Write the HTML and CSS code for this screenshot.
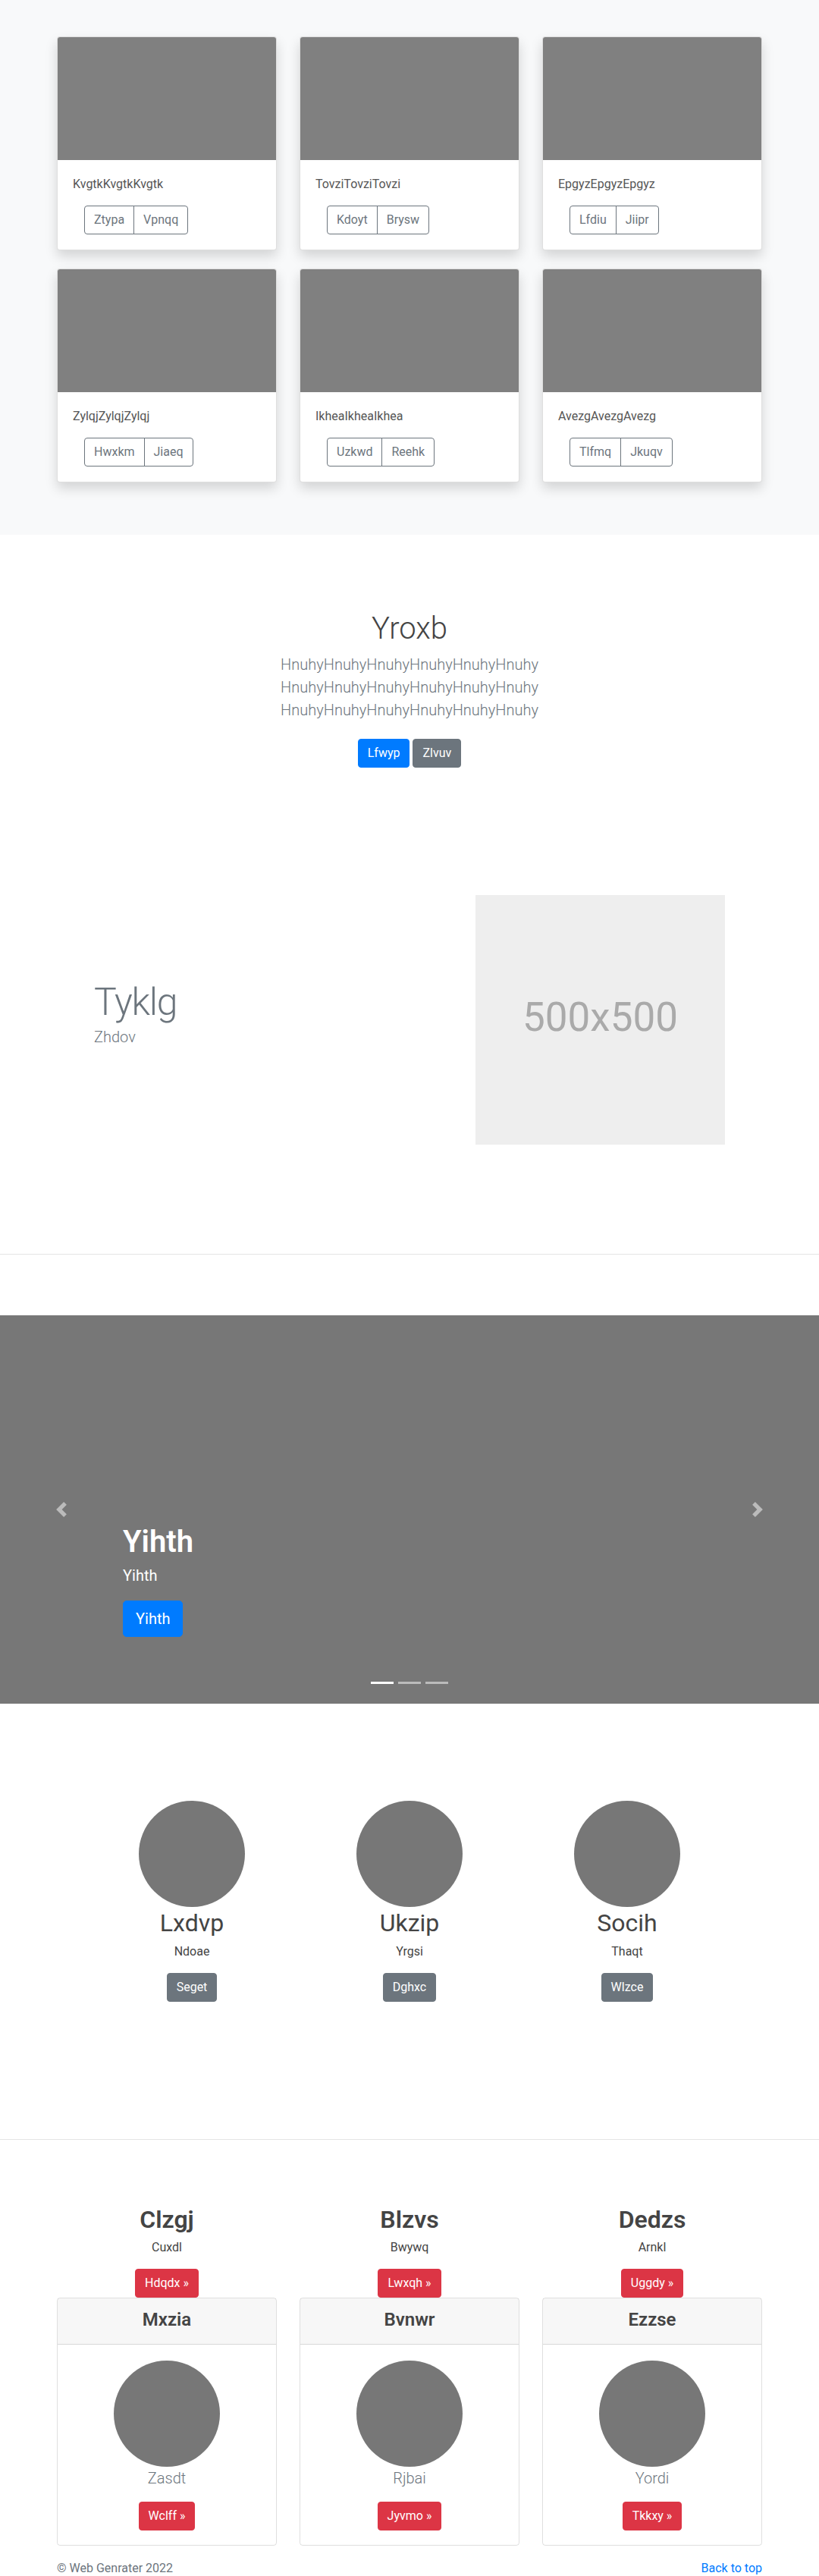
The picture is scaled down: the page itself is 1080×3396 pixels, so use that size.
FILE: index.html
```html
<!DOCTYPE html>
<html lang="en">
<head>
<meta charset="utf-8">
<title>Web Genrater</title>
<link rel="stylesheet" href="styles.css">
</head>
<body>

<section class="album">
  <div class="container">
    <div class="card-grid">
      <div class="card">
        <div class="card-img"></div>
        <div class="card-body">
          <p class="card-text">KvgtkKvgtkKvgtk</p>
          <div class="btn-group"><a class="btn btn-outline">Ztypa</a><a class="btn btn-outline">Vpnqq</a></div>
        </div>
      </div>
      <div class="card">
        <div class="card-img"></div>
        <div class="card-body">
          <p class="card-text">TovziTovziTovzi</p>
          <div class="btn-group"><a class="btn btn-outline">Kdoyt</a><a class="btn btn-outline">Brysw</a></div>
        </div>
      </div>
      <div class="card">
        <div class="card-img"></div>
        <div class="card-body">
          <p class="card-text">EpgyzEpgyzEpgyz</p>
          <div class="btn-group"><a class="btn btn-outline">Lfdiu</a><a class="btn btn-outline">Jiipr</a></div>
        </div>
      </div>
      <div class="card">
        <div class="card-img"></div>
        <div class="card-body">
          <p class="card-text">ZylqjZylqjZylqj</p>
          <div class="btn-group"><a class="btn btn-outline">Hwxkm</a><a class="btn btn-outline">Jiaeq</a></div>
        </div>
      </div>
      <div class="card">
        <div class="card-img"></div>
        <div class="card-body">
          <p class="card-text">IkheaIkheaIkhea</p>
          <div class="btn-group"><a class="btn btn-outline">Uzkwd</a><a class="btn btn-outline">Reehk</a></div>
        </div>
      </div>
      <div class="card">
        <div class="card-img"></div>
        <div class="card-body">
          <p class="card-text">AvezgAvezgAvezg</p>
          <div class="btn-group"><a class="btn btn-outline">Tlfmq</a><a class="btn btn-outline">Jkuqv</a></div>
        </div>
      </div>
    </div>
  </div>
</section>

<section class="hero">
  <div class="hero-inner">
    <h1 class="hero-title">Yroxb</h1>
    <p class="lead muted">HnuhyHnuhyHnuhyHnuhyHnuhyHnuhy HnuhyHnuhyHnuhyHnuhyHnuhyHnuhy HnuhyHnuhyHnuhyHnuhyHnuhyHnuhy</p>
    <div class="hero-actions">
      <a class="btn btn-primary">Lfwyp</a>
      <a class="btn btn-secondary">Zlvuv</a>
    </div>
  </div>
</section>

<section class="featurette">
  <div class="featurette-text">
    <h2 class="featurette-heading">Tyklg</h2>
    <p class="lead muted">Zhdov</p>
  </div>
  <div class="placeholder">500x500</div>
</section>

<hr class="divider divider-top">

<div class="carousel">
  <ol class="indicators">
    <li class="active"></li>
    <li></li>
    <li></li>
  </ol>
  <div class="caption">
    <h1 class="caption-title">Yihth</h1>
    <p class="caption-text">Yihth</p>
    <a class="btn btn-lg btn-primary">Yihth</a>
  </div>
  <a class="control control-prev">
    <svg width="20" height="20" viewBox="0 0 8 8"><path fill="#fff" d="M5.25 0l-4 4 4 4 1.5-1.5L4.25 4l2.5-2.5L5.25 0z"/></svg>
  </a>
  <a class="control control-next">
    <svg width="20" height="20" viewBox="0 0 8 8"><path fill="#fff" d="M2.75 0l-1.5 1.5L3.75 4l-2.5 2.5L2.75 8l4-4-4-4z"/></svg>
  </a>
</div>

<section class="marketing">
  <div class="marketing-row">
    <div class="feature">
      <div class="circle"></div>
      <h2 class="feature-title">Lxdvp</h2>
      <p class="feature-text">Ndoae</p>
      <a class="btn btn-secondary">Seget</a>
    </div>
    <div class="feature">
      <div class="circle"></div>
      <h2 class="feature-title">Ukzip</h2>
      <p class="feature-text">Yrgsi</p>
      <a class="btn btn-secondary">Dghxc</a>
    </div>
    <div class="feature">
      <div class="circle"></div>
      <h2 class="feature-title">Socih</h2>
      <p class="feature-text">Thaqt</p>
      <a class="btn btn-secondary">Wlzce</a>
    </div>
  </div>
</section>

<hr class="divider">

<section class="pricing">
  <div class="container pricing-grid">
    <div class="plan">
      <h2 class="plan-title">Clzgj</h2>
      <p class="plan-text">Cuxdl</p>
      <a class="btn btn-danger">Hdqdx &raquo;</a>
      <div class="pcard">
        <div class="pcard-header"><h4>Mxzia</h4></div>
        <div class="pcard-body">
          <div class="circle"></div>
          <p class="lead muted pcard-text">Zasdt</p>
          <a class="btn btn-danger">Wclff &raquo;</a>
        </div>
      </div>
    </div>
    <div class="plan">
      <h2 class="plan-title">Blzvs</h2>
      <p class="plan-text">Bwywq</p>
      <a class="btn btn-danger">Lwxqh &raquo;</a>
      <div class="pcard">
        <div class="pcard-header"><h4>Bvnwr</h4></div>
        <div class="pcard-body">
          <div class="circle"></div>
          <p class="lead muted pcard-text">Rjbai</p>
          <a class="btn btn-danger">Jyvmo &raquo;</a>
        </div>
      </div>
    </div>
    <div class="plan">
      <h2 class="plan-title">Dedzs</h2>
      <p class="plan-text">Arnkl</p>
      <a class="btn btn-danger">Uggdy &raquo;</a>
      <div class="pcard">
        <div class="pcard-header"><h4>Ezzse</h4></div>
        <div class="pcard-body">
          <div class="circle"></div>
          <p class="lead muted pcard-text">Yordi</p>
          <a class="btn btn-danger">Tkkxy &raquo;</a>
        </div>
      </div>
    </div>
  </div>
</section>

<footer class="footer">
  <div class="container footer-inner">
    <span class="footer-copy">&copy; Web Genrater 2022</span>
    <a class="footer-link">Back to top</a>
  </div>
</footer>

</body>
</html>
```

FILE: styles.css
```css
* { box-sizing: border-box; }

html, body {
  margin: 0;
  padding: 0;
}

body {
  font-family: Roboto, "Liberation Sans", Arial, sans-serif;
  font-size: 16px;
  line-height: 1.5;
  color: #444;
  background: #fff;
}

h1, h2, h4, p { margin: 0; }

.container {
  width: 930px;
  margin: 0 auto;
}

/* buttons */
.btn {
  display: inline-block;
  font-size: 16px;
  line-height: 24px;
  padding: 6px 12px;
  border: 1px solid transparent;
  border-radius: 4px;
  text-decoration: none;
  font-weight: 400;
  text-align: center;
  white-space: nowrap;
  cursor: pointer;
}
.btn-lg {
  font-size: 20px;
  line-height: 30px;
  padding: 8px 16px;
  border-radius: 5px;
}
.btn-primary { background: #007bff; border-color: #007bff; color: #fff; }
.btn-secondary { background: #6c757d; border-color: #6c757d; color: #fff; }
.btn-danger { background: #dc3545; border-color: #dc3545; color: #fff; }
.btn-outline { background: transparent; border-color: #6c757d; color: #6c757d; }

.lead { font-size: 20px; line-height: 30px; font-weight: 300; }
.muted { color: #6c757d; }

/* album */
.album {
  background: #f8f9fa;
  padding: 48px 0 69px;
}
.card-grid {
  display: grid;
  grid-template-columns: repeat(3, 290px);
  column-gap: 30px;
  row-gap: 24px;
}
.card {
  background: #fff;
  border: 1px solid rgba(0, 0, 0, 0.125);
  border-radius: 4px;
  overflow: hidden;
  box-shadow: 0 8px 16px rgba(0, 0, 0, 0.15);
}
.card-img {
  height: 162px;
  background: #808080;
}
.card-body {
  padding: 20px;
}
.card-text {
  color: #555;
  margin-bottom: 16px;
}
.btn-group {
  display: inline-flex;
  margin-left: 15px;
}
.btn-group .btn:first-child {
  border-top-right-radius: 0;
  border-bottom-right-radius: 0;
}
.btn-group .btn + .btn {
  margin-left: -1px;
  border-top-left-radius: 0;
  border-bottom-left-radius: 0;
}

/* hero */
.hero {
  padding: 100px 0 72px;
  text-align: center;
}
.hero-inner {
  max-width: 640px;
  margin: 0 auto;
  padding: 0 15px;
}
.hero-title {
  font-size: 40px;
  line-height: 48px;
  font-weight: 300;
  color: #444;
  margin-bottom: 8px;
}
.hero .lead { margin-bottom: 23px; }
.hero-actions {
  display: flex;
  justify-content: center;
  gap: 4px;
}

/* featurette */
.featurette {
  display: flex;
  align-items: center;
  justify-content: space-between;
  padding: 0 124px;
  margin-top: 96px;
}
.featurette-text {
  padding-top: 5px;
}
.featurette-heading {
  font-size: 50px;
  line-height: 1;
  font-weight: 300;
  letter-spacing: -1.2px;
  color: #6c757d;
  margin-bottom: 6px;
}
.featurette-text .lead { margin-bottom: 16px; }
.placeholder {
  width: 329px;
  height: 329px;
  background: #eee;
  color: #aaa;
  font-size: 53px;
  display: flex;
  align-items: center;
  justify-content: center;
  padding-bottom: 6px;
}

.divider {
  border: 0;
  border-top: 1px solid rgba(0, 0, 0, 0.1);
  margin: 0;
  height: 0;
}
.divider-top { margin-top: 144px; }

/* carousel */
.carousel {
  position: relative;
  height: 512px;
  background: #777;
  margin-top: 80px;
}
.indicators {
  position: absolute;
  left: 0;
  right: 0;
  bottom: 26px;
  margin: 0;
  padding: 0;
  list-style: none;
  display: flex;
  justify-content: center;
}
.indicators li {
  width: 30px;
  height: 3px;
  margin: 0 3px;
  background: #fff;
  opacity: 0.5;
}
.indicators li.active { opacity: 1; }
.caption {
  position: absolute;
  left: 162px;
  right: 162px;
  bottom: 88px;
  color: #fff;
  text-align: left;
}
.caption-title {
  font-size: 40px;
  line-height: 48px;
  font-weight: 600;
  margin-bottom: 5px;
}
.caption-text {
  font-size: 20px;
  line-height: 30px;
  margin-bottom: 18px;
}
.control {
  position: absolute;
  top: 0;
  bottom: 0;
  width: 162px;
  display: flex;
  align-items: center;
  justify-content: center;
  opacity: 0.5;
}
.control-prev { left: 0; }
.control-next { right: 0; }
.control svg { display: block; }

/* marketing */
.marketing {
  padding: 128px 0 181px;
}
.marketing-row {
  width: 861px;
  margin: 0 auto;
  display: flex;
}
.feature {
  flex: 1;
  text-align: center;
}
.circle {
  width: 140px;
  height: 140px;
  border-radius: 50%;
  background: #777;
  margin: 0 auto;
}
.feature-title {
  font-size: 32px;
  line-height: 1.2;
  font-weight: 400;
  margin: 2px 0 7px;
}
.feature-text { margin-bottom: 16px; }

/* pricing */
.pricing {
  padding-top: 86px;
}
.pricing-grid {
  display: grid;
  grid-template-columns: repeat(3, 290px);
  column-gap: 30px;
}
.plan { text-align: center; }
.plan-title {
  font-size: 32px;
  line-height: 1.2;
  font-weight: 600;
  margin-bottom: 5px;
}
.plan-text { margin-bottom: 16px; }
.pcard {
  border: 1px solid rgba(0, 0, 0, 0.125);
  border-radius: 4px;
  text-align: center;
}
.pcard-header {
  background: rgba(0, 0, 0, 0.03);
  border-bottom: 1px solid rgba(0, 0, 0, 0.125);
  padding: 14px 20px 17px;
}
.pcard-header h4 {
  font-size: 24px;
  line-height: 1.2;
  font-weight: 600;
}
.pcard-body {
  padding: 21px 20px 19px;
}
.pcard-text { margin-bottom: 16px; }

/* footer */
.footer {
  padding-top: 18px;
}
.footer-inner {
  display: flex;
  justify-content: space-between;
}
.footer-copy { color: #6c757d; }
.footer-link { color: #007bff; text-decoration: none; }
```
